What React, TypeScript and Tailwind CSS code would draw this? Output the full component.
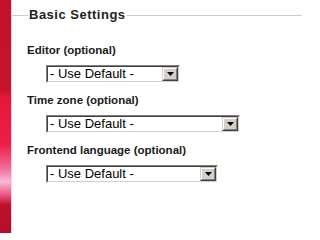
import React from "react";

//* classic win-style dropdown, fixed width per row
function OldSelect({ width }: { width: string }) {
  return (
    <div
      className={`${width} h-[18px] flex border border-t-[#808080] border-l-[#808080] border-b-[#ffffff] border-r-[#ffffff]`}
    >
      <div className="flex-1 flex border border-t-[#404040] border-l-[#404040] border-b-[#d4d0c8] border-r-[#d4d0c8] bg-white">
        <div className="flex-1 flex items-center pl-[2px] text-[13px] leading-[14px] text-black">
          - Use Default -
        </div>
        <div className="w-[16px] flex border border-t-[#d4d0c8] border-l-[#d4d0c8] border-b-[#404040] border-r-[#404040]">
          <div className="flex-1 flex items-center justify-center bg-[#d4d0c8] border border-t-white border-l-white border-b-[#808080] border-r-[#808080]">
            <svg width="7" height="4" viewBox="0 0 7 4">
              <polygon points="0,0 7,0 3.5,4" fill="#000" />
            </svg>
          </div>
        </div>
      </div>
    </div>
  );
}

const fields = [
  { label: "Editor (optional)", width: "w-[134px]" },
  { label: "Time zone (optional)", width: "w-[194px]" },
  { label: "Frontend language (optional)", width: "w-[172px]" },
];

export default function App() {
  return (
    <div
      className="flex w-[302px] h-[233px] bg-white overflow-hidden"
      style={{ fontFamily: '"Liberation Sans", Arial, sans-serif' }}
    >
      <div className="w-[12px] shrink-0 border-r border-[#f2d6dc] bg-[linear-gradient(180deg,#c4122e_0%,#c3132f_38%,#e8163c_42%,#ee1e48_62%,#f26a96_72%,#f7b8d6_78%,#e8507c_84%,#c0102c_88%,#b20f28_100%)]" />
      <div className="flex-1 flex flex-col">
        <div className="flex items-center mt-[7px] h-[16px]">
          <div className="w-[16px] h-[1px] bg-[#cccccc]" />
          <div className="px-[1px] text-[13px] leading-[16px] font-bold tracking-[0.5px] text-[#222]">
            Basic Settings
          </div>
          <div className="flex-1 h-[1px] bg-[#cccccc]" />
        </div>
        <div className="flex flex-col pl-[15px] pt-[20px]">
          {fields.map((f) => (
            <div key={f.label} className="flex flex-col h-[50px]">
              <div className="text-[11.5px] leading-[14px] font-bold text-[#1a1a1a]">
                {f.label}
              </div>
              <div className="mt-[8px] pl-[19px]">
                <OldSelect width={f.width} />
              </div>
            </div>
          ))}
        </div>
      </div>
    </div>
  );
}
